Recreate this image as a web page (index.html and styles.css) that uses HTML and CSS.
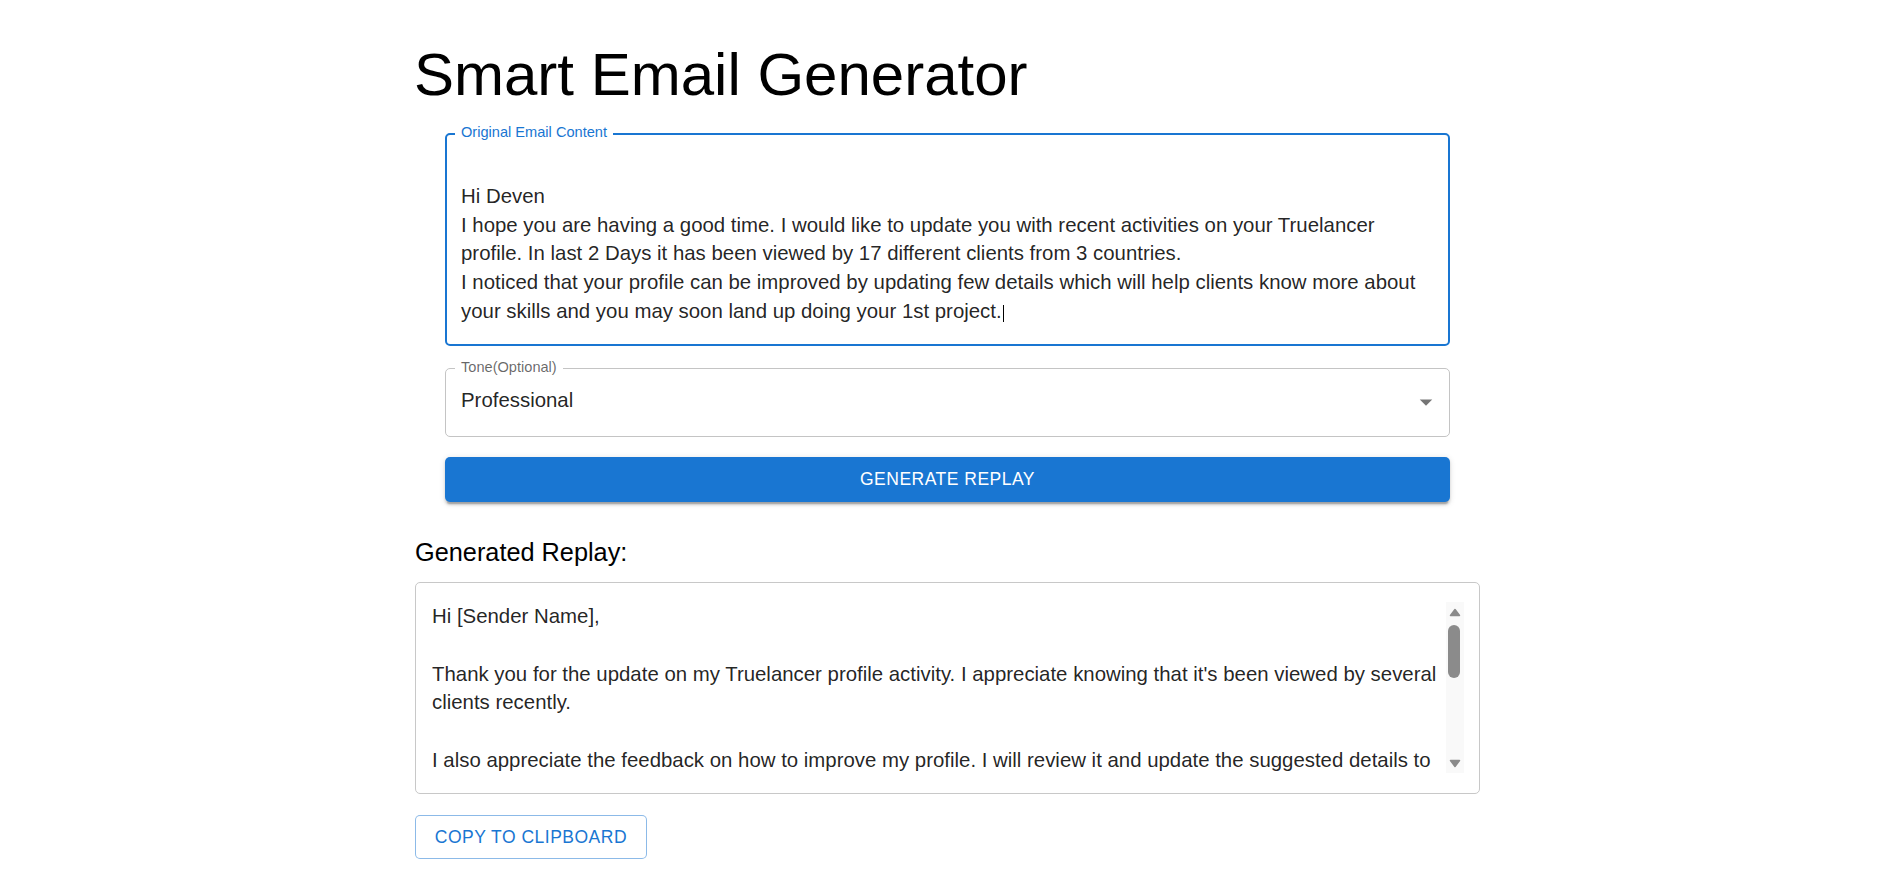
FILE: index.html
```html
<!DOCTYPE html>
<html lang="en">
<head>
<meta charset="utf-8">
<title>Smart Email Generator</title>
<link rel="stylesheet" href="styles.css">
</head>
<body>
<div class="container">
  <h1 class="title">Smart Email Generator</h1>
  <div class="form">
    <div class="field focused">
      <span class="field-label">Original Email Content</span>
      <div class="field-text"><br>Hi Deven<br>I hope you are having a good time. I would like to update you with recent activities on your Truelancer<br>profile. In last 2 Days it has been viewed by 17 different clients from 3 countries.<br>I noticed that your profile can be improved by updating few details which will help clients know more about<br>your skills and you may soon land up doing your 1st project.<span class="caret"></span></div>
    </div>
    <div class="select">
      <span class="field-label grey">Tone(Optional)</span>
      <div class="select-value">Professional</div>
      <svg class="select-icon" viewBox="0 0 24 24" width="30" height="30"><path d="M7 10l5 5 5-5z"/></svg>
    </div>
    <button class="btn-primary">Generate Replay</button>
  </div>
  <h2 class="subtitle">Generated Replay:</h2>
  <div class="reply-box">
    <div class="reply-scroll">Hi [Sender Name],

Thank you for the update on my Truelancer profile activity. I appreciate knowing that it's been viewed by several clients recently.

I also appreciate the feedback on how to improve my profile. I will review it and update the suggested details to</div>
    <div class="scrollbar">
      <svg class="sb-arrow up" viewBox="0 0 12 9" width="12" height="9"><path d="M1.5 7.5 L6 1.5 L10.5 7.5 Z"/></svg>
      <div class="sb-thumb"></div>
      <div class="sb-space"></div>
      <svg class="sb-arrow down" viewBox="0 0 12 9" width="12" height="9"><path d="M1.5 1.5 L6 7.5 L10.5 1.5 Z"/></svg>
    </div>
  </div>
  <button class="btn-outline">Copy to Clipboard</button>
</div>
</body>
</html>
```
FILE: styles.css
```css
html, body {
  margin: 0;
  padding: 0;
  background: #fff;
}
body {
  font-family: "Liberation Sans", Arial, sans-serif;
  color: #000;
  padding-left: 4px;
}
.container {
  width: 1065px;
  margin: 0 auto;
  padding-top: 40px;
  padding-bottom: 30px;
}
.title {
  margin: 0 0 23px -1px;
  font-size: 60px;
  line-height: 70px;
  font-weight: 400;
}
.form {
  margin: 0 30px;
}
.field {
  position: relative;
  border: 2px solid #1976d2;
  border-radius: 5px;
  padding: 18px 12px 18.5px 14px;
}
.field-text {
  font-size: 20.4px;
  line-height: 28.75px;
  color: rgba(0, 0, 0, 0.87);
  white-space: nowrap;
}
.caret {
  display: inline-block;
  width: 1px;
  height: 17px;
  background: #000;
  vertical-align: -4px;
  margin-left: 1px;
}
.field-label {
  position: absolute;
  top: -10px;
  left: 8px;
  padding: 0 6px;
  background: #fff;
  font-size: 14.6px;
  line-height: 15px;
  color: #1976d2;
  white-space: nowrap;
}
.field-label.grey {
  top: -9px;
  left: 9px;
  color: rgba(0, 0, 0, 0.6);
}
.select {
  position: relative;
  margin-top: 22px;
  height: 69px;
  box-sizing: border-box;
  border: 1px solid #c4c4c4;
  border-radius: 5px;
  padding: 17px 13px 0 15px;
}
.select-value {
  font-size: 20.4px;
  line-height: 28.75px;
  color: rgba(0, 0, 0, 0.87);
}
.select-icon {
  position: absolute;
  right: 8px;
  top: 18px;
  fill: rgba(0, 0, 0, 0.54);
}
.btn-primary {
  display: block;
  width: 100%;
  margin-top: 20px;
  height: 45px;
  padding: 0;
  border: 0;
  border-radius: 5px;
  background: #1976d2;
  color: #fff;
  font-family: "Liberation Sans", Arial, sans-serif;
  font-size: 17.5px;
  line-height: 43px;
  letter-spacing: 0.5px;
  text-transform: uppercase;
  box-shadow: 0 3.75px 1.25px -2.5px rgba(0, 0, 0, 0.2), 0 2.5px 2.5px 0 rgba(0, 0, 0, 0.14), 0 1.25px 6.25px 0 rgba(0, 0, 0, 0.12);
}
.subtitle {
  margin: 30px 0 10px;
  font-size: 25.3px;
  line-height: 40px;
  font-weight: 400;
}
.reply-box {
  display: flex;
  border: 1px solid #c8c8c8;
  border-radius: 5px;
  padding: 19px 15px 20px 16px;
}
.reply-scroll {
  flex: 1;
  height: 171px;
  overflow: hidden;
  white-space: pre-wrap;
  font-size: 20.4px;
  line-height: 28.75px;
  color: rgba(0, 0, 0, 0.87);
}
.scrollbar {
  width: 18px;
  height: 171px;
  display: flex;
  flex-direction: column;
  align-items: center;
  background: #f9f9f9;
}
.sb-arrow {
  fill: #8b8b8b;
  stroke: #8b8b8b;
  stroke-width: 1.5;
  stroke-linejoin: round;
  flex: none;
}
.sb-arrow.up {
  margin-top: 6px;
}
.sb-arrow.down {
  margin-bottom: 5px;
}
.sb-thumb {
  flex: none;
  width: 12px;
  height: 53px;
  margin-top: 8px;
  margin-right: 2px;
  border-radius: 6px;
  background: #8b8b8b;
}
.sb-space {
  flex: 1;
}
.btn-outline {
  display: inline-block;
  margin-top: 21px;
  height: 44px;
  padding: 0 18.75px;
  border: 1px solid rgba(25, 118, 210, 0.5);
  border-radius: 5px;
  background: #fff;
  color: #1976d2;
  font-family: "Liberation Sans", Arial, sans-serif;
  font-size: 17.5px;
  line-height: 42px;
  letter-spacing: 0.5px;
  text-transform: uppercase;
}
```
